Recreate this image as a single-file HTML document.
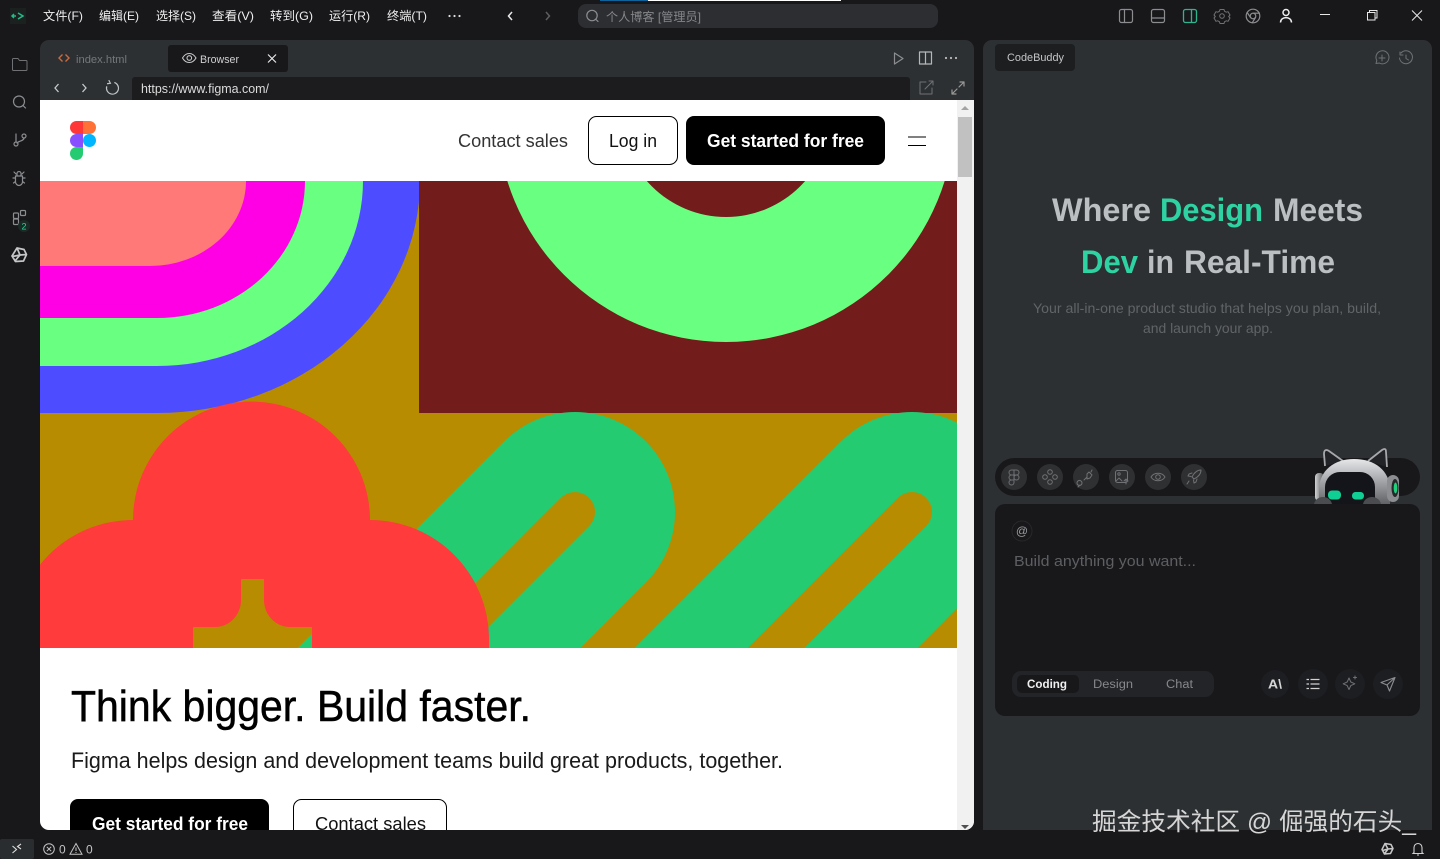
<!DOCTYPE html>
<html lang="zh"><head><meta charset="utf-8"><title>CodeBuddy</title>
<style>
html,body{margin:0;padding:0;background:#18181b;width:1440px;height:859px;overflow:hidden}
svg{display:block}
text{font-family:"Liberation Sans","Noto Sans CJK SC",sans-serif;white-space:pre}
.i{fill:none;stroke:#8b8d90;stroke-width:1.2;stroke-linecap:round;stroke-linejoin:round}
.s{fill:none;stroke:#6f7174;stroke-width:1;stroke-linecap:round;stroke-linejoin:round}
.m{fill:#efefef;font-size:12px}
</style></head><body>
<svg xmlns="http://www.w3.org/2000/svg" width="1440" height="859" viewBox="0 0 1440 859">
<defs>
<clipPath id="hero"><rect x="40" y="181" width="917" height="467"/></clipPath>
<clipPath id="panel"><rect x="40" y="40" width="934" height="790" rx="9"/></clipPath>
<clipPath id="rob"><rect x="1300" y="440" width="110" height="64"/></clipPath>
<linearGradient id="silver" x1="0" y1="0" x2="0" y2="1"><stop offset="0" stop-color="#e6e7e9"/><stop offset=".35" stop-color="#b4b6ba"/><stop offset="1" stop-color="#5a5c5f"/></linearGradient>
<linearGradient id="cup" x1="0" y1="0" x2="1" y2="0"><stop offset="0" stop-color="#d0d1d3"/><stop offset="1" stop-color="#55575a"/></linearGradient>
</defs>
<rect width="1440" height="859" fill="#18181b"/>

<!-- top bar -->
<rect x="600" y="0" width="48" height="1" fill="#0e639c"/><rect x="648" y="0" width="193" height="1" fill="#fff"/>
<rect x="10" y="8" width="16" height="16" fill="#1b211f"/>
<path d="M12 16h4M14 14l-2 2 2 2M18 13l5 3-5 3" fill="none" stroke="#26b98a" stroke-width="1.5"/>
<text class="m" x="43" y="20" textLength="40" lengthAdjust="spacingAndGlyphs">文件(F)</text>
<text class="m" x="99" y="20" textLength="40" lengthAdjust="spacingAndGlyphs">编辑(E)</text>
<text class="m" x="156" y="20" textLength="40" lengthAdjust="spacingAndGlyphs">选择(S)</text>
<text class="m" x="212" y="20" textLength="42" lengthAdjust="spacingAndGlyphs">查看(V)</text>
<text class="m" x="270" y="20" textLength="43" lengthAdjust="spacingAndGlyphs">转到(G)</text>
<text class="m" x="329" y="20" textLength="41" lengthAdjust="spacingAndGlyphs">运行(R)</text>
<text class="m" x="387" y="20" textLength="40" lengthAdjust="spacingAndGlyphs">终端(T)</text>
<g fill="#ddd"><circle cx="449.500" cy="16" r="1.100"/><circle cx="454.500" cy="16" r="1.100"/><circle cx="459.500" cy="16" r="1.100"/></g>
<path d="M512 12l-3.500 4 3.500 4" fill="none" stroke="#e8e8e8" stroke-width="1.500"/>
<path d="M546 12l3.500 4-3.500 4" fill="none" stroke="#5c5e60" stroke-width="1.500"/>
<rect x="578" y="4" width="360" height="24" rx="8" fill="#2c2e31"/>
<circle cx="592" cy="15.500" r="5.200" class="i"/><path d="M596 19.500l2 2" class="i"/>
<text x="606" y="21" font-size="12" fill="#85878a" textLength="95" lengthAdjust="spacingAndGlyphs">个人博客 [管理员]</text>

<!-- top right icons -->
<rect x="1119.500" y="9.500" width="13" height="13" rx="2" class="i"/><path d="M1124.500 9.500v13" class="i"/>
<rect x="1151.500" y="9.500" width="13" height="13" rx="2" class="i"/><path d="M1151.500 18h13" class="i"/>
<rect x="1183.500" y="9.500" width="13" height="13" rx="2" fill="none" stroke="#2fb58d" stroke-width="1.300"/><path d="M1191.500 9.500v13" stroke="#2fb58d" stroke-width="1.300"/>
<path d="M1220 9.500h4l.6 1.800 1.700.9 1.800-.5 1.900 3.300-1.300 1.500 1.300 1.500-1.900 3.300-1.800-.5-1.700.9-.6 1.800h-4l-.6-1.800-1.700-.9-1.800.5-1.900-3.300 1.300-1.500-1.300-1.500 1.900-3.300 1.800.5 1.700-.9z" class="s"/><circle cx="1222" cy="16" r="2.300" class="s"/>
<circle cx="1253" cy="16" r="6.800" class="i"/><circle cx="1253" cy="16" r="2.800" class="i"/><path d="M1253 13.200h6.500M1250.500 17.500l-3.300-5M1255.500 17.500l-3.200 5.200" class="i"/>
<circle cx="1286" cy="12.500" r="3" fill="none" stroke="#eee" stroke-width="1.500"/><path d="M1280.500 22.500c0-6.500 11-6.500 11 0" fill="none" stroke="#eee" stroke-width="1.500"/>
<path d="M1320 14.500h10" stroke="#e8e8e8" stroke-width="1"/>
<path d="M1367.500 12.500h7.500v7.500h-7.500zM1369.500 12.500v-2h7.500v7.500h-2" fill="none" stroke="#e8e8e8" stroke-width="1"/>
<path d="M1412 10.500l10 10M1422 10.500l-10 10" stroke="#e8e8e8" stroke-width="1"/>

<!-- sidebar -->
<path d="M13.500 58.500h4.500l1.500 2h6.500a1 1 0 0 1 1 1v8a1 1 0 0 1-1 1h-12.500a1 1 0 0 1-1-1v-10a1 1 0 0 1 1-1z" class="s" stroke="#77797c"/>
<circle cx="19" cy="101.500" r="5.500" class="i"/><path d="M23 105.500l2.500 2.500" class="i"/>
<circle cx="16" cy="144" r="2" class="i"/><circle cx="24" cy="136" r="2" class="i"/><path d="M16 142v-8M24 138c0 3-6 3-7 5" class="i"/>
<path d="M16 174l-2-2M22 174l2-2M13 178h2M23 178h2M13.500 183l2-1.500M24.500 183l-2-1.500M15.500 176h7v6c0 2-2 3.500-3.500 3.500s-3.500-1.500-3.500-3.500zM17 173.500a2 2 0 0 1 4 0v2.500h-4z" class="i"/>
<rect x="13.500" y="213" width="5" height="5.500" rx="1" class="i"/><rect x="13.500" y="219" width="5" height="5.500" rx="1" class="i"/><rect x="20.500" y="210.500" width="5" height="5" rx="1" class="i"/>
<circle cx="24" cy="226" r="6" fill="#1b2a25"/><text x="24" y="229.500" font-size="9" fill="#2fd09d" text-anchor="middle">2</text>
<path d="M17 248l7 1.500 2.500 5-3 6.500-8 .5-3.500-5.500zM17 248l3 7 6.500-.5M20 255l-5.500 6.500M20 255l-7.500 1.500" fill="none" stroke="#c4c6c8" stroke-width="1.700" stroke-linejoin="round"/>

<!-- left panel -->
<g clip-path="url(#panel)">
<rect x="40" y="40" width="934" height="790" fill="#2d3033"/>
<path d="M62.500 54.500l-3.500 3.500 3.500 3.500M65.500 54.500l3.500 3.500-3.500 3.500" fill="none" stroke="#c96a3f" stroke-width="1.400"/>
<text x="76" y="63" font-size="11" fill="#75787b" textLength="51" lengthAdjust="spacingAndGlyphs">index.html</text>
<rect x="168" y="45" width="120" height="27" rx="3" fill="#18181b"/>
<path d="M182.500 58c3.500-6 10-6 13.500 0-3.500 6-10 6-13.500 0z" fill="none" stroke="#c4c6c8" stroke-width="1.100"/><circle cx="189.300" cy="58" r="2.300" fill="none" stroke="#c4c6c8" stroke-width="1.100"/>
<text x="200" y="63" font-size="11" fill="#cfd0d1" textLength="39" lengthAdjust="spacingAndGlyphs">Browser</text>
<path d="M268 54.500l8 8M276 54.500l-8 8" stroke="#e8e8e8" stroke-width="1.200"/>
<path d="M894.500 53l8.500 5.500-8.500 5.500z" class="i"/>
<rect x="919.500" y="52" width="12" height="12" class="i" style="stroke:#b5b7b9"/><path d="M925.500 52v12" class="i" style="stroke:#b5b7b9"/>
<g fill="#bbb"><circle cx="946" cy="58" r="1.100"/><circle cx="951" cy="58" r="1.100"/><circle cx="956" cy="58" r="1.100"/></g>
<path d="M58.500 84l-3.500 4 3.500 4M82.500 84l3.500 4-3.500 4" fill="none" stroke="#c8c9cb" stroke-width="1.300"/>
<path d="M112.500 82a6 6 0 1 1-6 6M106.500 81.500l2.500 2.500-3 1.500" fill="none" stroke="#c0c2c4" stroke-width="1.200" transform="rotate(18 112 88)"/>
<rect x="132" y="77" width="778" height="26" rx="3" fill="#1c1c1f"/>
<text x="141" y="93" font-size="12.500" fill="#dcdcdc" textLength="128" lengthAdjust="spacingAndGlyphs">https://www.figma.com/</text>
<path d="M926 82h-6v12h12v-6M925 89l8-8M929 81h4v4" class="s"/>
<path d="M952 94l5-5M952 90v4h4M959 87l5-5M960 82h4v4" class="i" style="stroke:#999"/>

<!-- page -->
<rect x="40" y="100" width="934" height="730" fill="#fff"/>
<rect x="957" y="100" width="17" height="730" fill="#f1f1f1"/>
<rect x="958" y="117" width="14" height="60" fill="#c1c1c1"/>
<path d="M965 106l-4 4h8z" fill="#a3a3a3"/><path d="M961 825h8l-4 4z" fill="#505050"/>
<!-- logo -->
<path d="M83 121h-6.500a6.500 6.500 0 0 0 0 13h6.500z" fill="#ff3737"/>
<path d="M83 121h6.500a6.500 6.500 0 0 1 0 13h-6.500z" fill="#ff7237"/>
<path d="M83 134h-6.500a6.500 6.500 0 0 0 0 13h6.500z" fill="#874fff"/>
<circle cx="89.500" cy="140.500" r="6.500" fill="#00b6ff"/>
<path d="M83 147h-6.500a6.500 6.500 0 1 0 6.500 6.500z" fill="#24cb71"/>
<text x="458" y="147" font-size="18" fill="#333" textLength="110" lengthAdjust="spacingAndGlyphs">Contact sales</text>
<rect x="588.500" y="116.500" width="89" height="48" rx="8" fill="#fff" stroke="#000"/>
<text x="609" y="147" font-size="18" fill="#111" textLength="48" lengthAdjust="spacingAndGlyphs">Log in</text>
<rect x="686" y="116" width="199" height="49" rx="8" fill="#000"/>
<text x="707" y="147" font-size="18" font-weight="700" fill="#fff" textLength="157" lengthAdjust="spacingAndGlyphs">Get started for free</text>
<rect x="908" y="136.500" width="18" height="1" fill="#000"/><rect x="908" y="145" width="18" height="1" fill="#000"/>

<!-- hero -->
<g clip-path="url(#hero)">
<rect x="40" y="181" width="917" height="467" fill="#b88c00"/>
<path d="M40 181H420A263 232 0 0 1 157 413H40z" fill="#4d4dff"/>
<path d="M40 181H363A206 185 0 0 1 157 366H40z" fill="#69ff80"/>
<path d="M40 181H305A148 137 0 0 1 157 318H40z" fill="#ff00e5"/>
<path d="M40 181H246A96 85 0 0 1 150 266H40z" fill="#ff7979"/>
<rect x="419" y="181" width="538" height="232" fill="#721c1c"/>
<circle cx="726" cy="113" r="229" fill="#69ff80"/>
<circle cx="726" cy="112" r="105" fill="#721c1c"/>
<path d="M575 512L275 812" stroke="#24cb71" stroke-width="200" stroke-linecap="round"/>
<path d="M575 512L275 812" stroke="#b88c00" stroke-width="40" stroke-linecap="round"/>
<path d="M912 512L612 812" stroke="#24cb71" stroke-width="200" stroke-linecap="round"/>
<path d="M912 512L612 812" stroke="#b88c00" stroke-width="40" stroke-linecap="round"/>
<path d="M133 520A118.500 118.500 0 0 1 370 520A119 119 0 0 1 489 639V648H312V627H290A26 27 0 0 1 264 600V579H241V600A26 27 0 0 1 215 627H193V648H14V639A119 119 0 0 1 133 520z" fill="#ff3b3b"/>
</g>

<text x="71" y="721" font-size="44" fill="#000" stroke="#000" stroke-width=".5" textLength="460" lengthAdjust="spacingAndGlyphs">Think bigger. Build faster.</text>
<text x="71" y="768" font-size="22" fill="#1a1a1a" textLength="712" lengthAdjust="spacingAndGlyphs">Figma helps design and development teams build great products, together.</text>
<rect x="70" y="799" width="199" height="60" rx="8" fill="#000"/>
<text x="92" y="830" font-size="18" font-weight="700" fill="#fff" textLength="156" lengthAdjust="spacingAndGlyphs">Get started for free</text>
<rect x="293.500" y="799.500" width="153" height="60" rx="8" fill="#fff" stroke="#000"/>
<text x="315" y="830" font-size="18" fill="#111" textLength="111" lengthAdjust="spacingAndGlyphs">Contact sales</text>
</g>

<!-- right panel -->
<rect x="983" y="40" width="449" height="790" rx="9" fill="#2d3032"/>
<path d="M983 820h449v10h-449z" fill="#2d3032"/>
<rect x="995" y="44" width="80" height="27" rx="4" fill="#1c1e20"/>
<text x="1007" y="61" font-size="11" fill="#c4c6c7" textLength="57" lengthAdjust="spacingAndGlyphs">CodeBuddy</text>
<path d="M1376 63.500l.8-3a6.500 6.500 0 1 1 2.500 2.500z" class="s" stroke="#808285"/><path d="M1382 55v6M1379 58h6" class="s"/>
<path d="M1401 53a6.500 6.500 0 1 1-1.500 5M1400 52v3h3M1406 55v3.500l2.500 1.500" class="s"/>
<g font-size="32" font-weight="700">
<text x="1052" y="221" fill="#bcbfc1" textLength="99" lengthAdjust="spacingAndGlyphs">Where</text>
<text x="1160" y="221" fill="#2ed3a3" textLength="103" lengthAdjust="spacingAndGlyphs">Design</text>
<text x="1273" y="221" fill="#bcbfc1" textLength="90" lengthAdjust="spacingAndGlyphs">Meets</text>
<text x="1081" y="273" fill="#2ed3a3" textLength="57" lengthAdjust="spacingAndGlyphs">Dev</text>
<text x="1147" y="273" fill="#bcbfc1" textLength="27" lengthAdjust="spacingAndGlyphs">in</text>
<text x="1184" y="273" fill="#bcbfc1" textLength="151" lengthAdjust="spacingAndGlyphs">Real-Time</text>
</g>
<text x="1033" y="313" font-size="14" fill="#616466" textLength="348" lengthAdjust="spacingAndGlyphs">Your all-in-one product studio that helps you plan, build,</text>
<text x="1143" y="333" font-size="14" fill="#616466" textLength="130" lengthAdjust="spacingAndGlyphs">and launch your app.</text>

<!-- tool pill -->
<rect x="995" y="458" width="425" height="38" rx="19" fill="#18181b"/>
<g fill="#2f3032"><circle cx="1014" cy="477" r="13"/><circle cx="1050" cy="477" r="13"/><circle cx="1086" cy="477" r="13"/><circle cx="1122" cy="477" r="13"/><circle cx="1158" cy="477" r="13"/><circle cx="1194" cy="477" r="13"/></g>
<g class="s" stroke="#85878a">
<path d="M1014 470h-2.500a2.500 2.500 0 0 0 0 5h2.500zM1014 470h2.500a2.500 2.500 0 0 1 0 5h-2.500zM1014 475h-2.500a2.500 2.500 0 0 0 0 5h2.500zM1014 480h-2.500a2.500 2.500 0 1 0 2.500 2.500zM1019 477.500a2.500 2.500 0 1 1-5 0 2.500 2.500 0 0 1 5 0z"/>
<circle cx="1050" cy="472" r="2.300"/><circle cx="1050" cy="482" r="2.300"/><circle cx="1045" cy="477" r="2.300"/><circle cx="1055" cy="477" r="2.300"/>
<path d="M1082 483a2.500 2.500 0 1 1 0-.1zM1084 480l3-3M1087 474l2-2 3 3-2 3-3 1zM1092 470l-1 2M1080 485l-2 2"/>
<rect x="1115.500" y="470.500" width="12" height="12" rx="2"/><circle cx="1119" cy="474" r="1.200"/><path d="M1116 481l3-3 3 3M1126 484v-5M1124 481l2-2 2 2"/>
<path d="M1151 477c3-5 11-5 14 0-3 5-11 5-14 0z"/><circle cx="1158" cy="477" r="2.300"/>
<path d="M1201 470c-4 0-7 3-9 7l2 2c4-2 7-5 7-9zM1192 473l-3 1-1 2 3 .5M1197 479l-1 3-2 1-.5-3M1189 481l-2 3"/>
</g>

<!-- robot -->
<g clip-path="url(#rob)">
<path d="M1325 466l-1-12c0-4 2-5 5-3l14 10M1368 461l14-11c3-2 4-1 4 2l1 15" fill="#222326" stroke="#a6a8ab" stroke-width="1.800" stroke-linejoin="round"/>
<rect x="1315" y="473" width="9" height="28" rx="4" fill="url(#cup)"/>
<path d="M1319 506V490C1319 470 1335 459 1354 459C1374 459 1390 470 1390 490V506z" fill="url(#silver)"/>
<rect x="1325" y="472" width="50" height="42" rx="15" fill="#14151a"/>
<rect x="1387" y="475" width="12" height="27" rx="6" fill="#8c8e91"/><ellipse cx="1395" cy="488" rx="3.500" ry="9" fill="#26282a"/><ellipse cx="1395.500" cy="488" rx="1.800" ry="5.500" fill="#1fd07c"/>
<rect x="1328" y="490.500" width="13" height="9" rx="4" fill="#0fcf95"/>
<rect x="1352" y="492" width="12" height="7.500" rx="3.500" fill="#0fcf95"/>
<ellipse cx="1323" cy="505" rx="9" ry="8" fill="#4a4c4f"/><ellipse cx="1372" cy="505" rx="9" ry="8" fill="#4a4c4f"/>
</g>

<!-- input -->
<rect x="995" y="504" width="425" height="212" rx="10" fill="#18181b"/>
<circle cx="1022" cy="531" r="10" fill="none" stroke="#27282b"/>
<text x="1022" y="535" font-size="12" fill="#9b9da0" text-anchor="middle">@</text>
<text x="1014" y="566" font-size="15" fill="#5d5f62" textLength="182" lengthAdjust="spacingAndGlyphs">Build anything you want...</text>
<rect x="1012" y="671" width="202" height="26" rx="9" fill="#232427"/>
<rect x="1017" y="675" width="62" height="18" rx="5" fill="#18181b"/>
<text x="1027" y="688" font-size="11.500" font-weight="700" fill="#f0f0f0" textLength="40" lengthAdjust="spacingAndGlyphs">Coding</text>
<text x="1093" y="688" font-size="11.500" fill="#86888b" textLength="40" lengthAdjust="spacingAndGlyphs">Design</text>
<text x="1166" y="688" font-size="11.500" fill="#86888b" textLength="27" lengthAdjust="spacingAndGlyphs">Chat</text>
<g fill="#1d1e21"><circle cx="1275" cy="684" r="14"/><circle cx="1313" cy="684" r="15"/><circle cx="1350" cy="684" r="15"/><circle cx="1388" cy="684" r="15"/></g>
<text x="1275" y="688.500" font-size="13" font-weight="700" fill="#d6d6d6" text-anchor="middle" textLength="14" lengthAdjust="spacingAndGlyphs">A\</text>
<path d="M1310.500 679.500h9M1310.500 684h9M1310.500 688.500h9M1306.500 679.500h2.500M1306.500 684h2.500M1306.500 688.500h2.500" stroke="#d2d2d2" stroke-width="1.200"/>
<path d="M1349 678l1.800 4 4 1.800-4 1.800-1.800 4-1.800-4-4-1.800 4-1.800zM1355 676v3M1353.500 677.500h3" class="s" stroke="#7f8184"/>
<path d="M1395 677.500l-14 5 6 2.500 2.500 6zM1387 685l8-7.500" fill="none" stroke="#8b8d90" stroke-width="1.100" stroke-linejoin="round"/>

<!-- status bar -->
<rect x="0" y="839" width="34" height="20" rx="2" fill="#2a2d30"/>
<path d="M12.500 846l4 3.500-4 3.500M21 844l-3.500 2.500 3.500 2.500" fill="none" stroke="#ddd" stroke-width="1.100"/>
<circle cx="49" cy="849" r="5.300" fill="none" stroke="#c4c4c4"/><path d="M46.800 846.800l4.400 4.400M51.200 846.800l-4.400 4.400" stroke="#c4c4c4"/>
<text x="59" y="853.500" font-size="12" fill="#c4c4c4">0</text>
<path d="M76 843.500l6 10.800h-12z" fill="none" stroke="#c4c4c4"/><path d="M76 847.500v3.500M76 852v1" stroke="#c4c4c4"/>
<text x="86" y="853.500" font-size="12" fill="#c4c4c4">0</text>
<path d="M1385 843.500l6 1 2 4-2.500 5-6 .5-2.500-4.500zM1385 843.500l3 5.500 5-.5M1388 849l-4 5.500M1388 849l-5.500 1.500" fill="none" stroke="#c8c8c8" stroke-width="1.500" stroke-linejoin="round"/>
<path d="M1414 852.500v-5a4 4 0 0 1 8 0v5l1 1h-10zM1417 855h2" fill="none" stroke="#cfcfcf" stroke-width="1.100"/>

<!-- watermark -->
<text x="1092" y="830" font-size="24.500" fill="#d6d6d6" textLength="324" lengthAdjust="spacingAndGlyphs">掘金技术社区 @ 倔强的石头_</text>
</svg>
</body></html>
